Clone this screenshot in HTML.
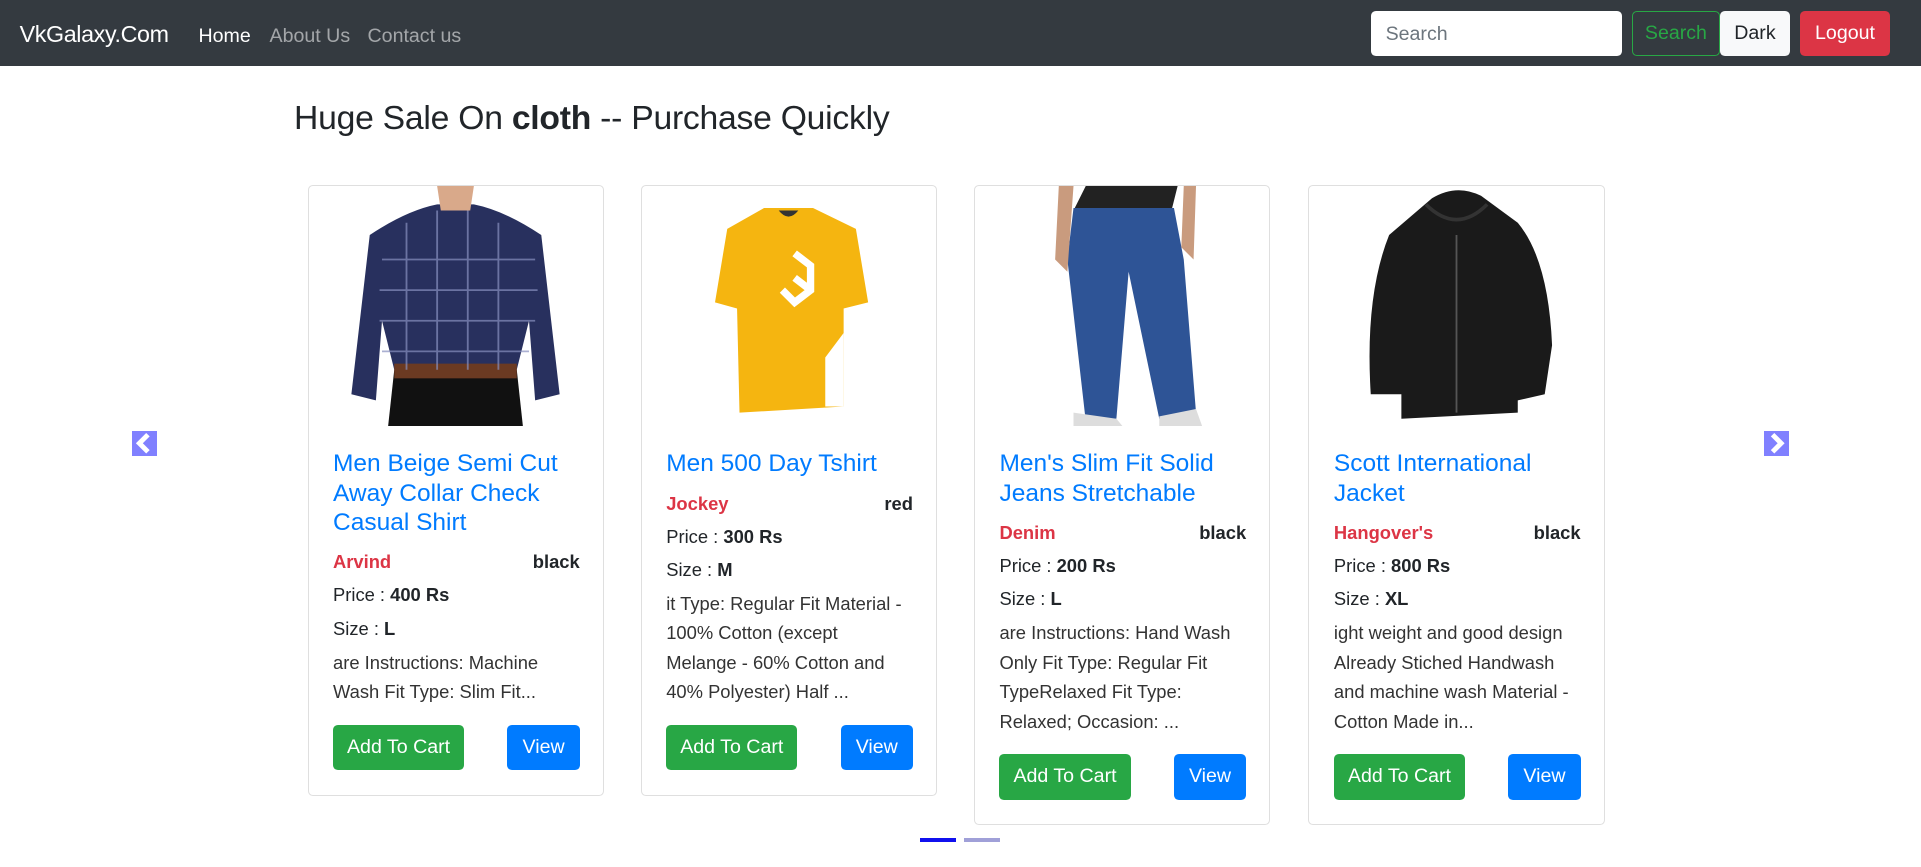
<!DOCTYPE html>
<html><head><meta charset="utf-8"><style>
*{box-sizing:border-box;margin:0;padding:0}
html,body{width:1921px;height:867px;overflow:hidden;background:#fff}
#w{zoom:1.2251;width:1568px;height:708px;position:relative;font-family:"Liberation Sans",sans-serif;color:#212529}
.nav{height:54px;background:#343a40;position:relative}
.brand{position:absolute;left:16px;top:17px;color:#fff;font-size:19px;letter-spacing:-.3px}
.nl{position:absolute;top:20px;font-size:16px;color:rgba(255,255,255,.55)}
.inp{position:absolute;left:1119px;top:9px;width:205px;height:37px;background:#fff;border-radius:4px;padding:10px 12px;color:#6c757d;font-size:16px}
.btn{position:absolute;top:9px;height:37px;border-radius:4px;font-size:16px;text-align:center;line-height:37px}
h3{position:absolute;left:240px;top:82px;font-size:27.5px;font-weight:500;letter-spacing:-.2px}
.card{position:absolute;top:151px;width:242px;border:1px solid #dfdfdf;border-radius:4px;background:#fff}
.img{height:196px;display:flex;justify-content:center;overflow:hidden}
.body{padding:19px 19px 20px 20px}
.t{color:#007bff;font-size:20px;line-height:24px;font-weight:500}
.row{display:flex;justify-content:space-between;font-weight:bold;font-size:15px;line-height:24px;margin-top:8px}
.row span:first-child{color:#dc3545}
.ln{font-size:15px;line-height:24px;margin-top:3px}
.d{font-size:15px;line-height:24px;margin-top:4px;color:#333}
.bt{display:flex;justify-content:space-between;margin-top:15px}
.bt div{height:37px;line-height:37px;border-radius:4px;color:#fff;font-size:16px;text-align:center}
.arr{position:absolute;top:352px;width:20px;height:20px;background:#8080ff}
</style></head><body><div id="w">
<div class="nav">
<div class="brand">VkGalaxy.Com</div>
<div class="nl" style="left:162px;color:#fff">Home</div>
<div class="nl" style="left:220px">About Us</div>
<div class="nl" style="left:300px">Contact us</div>
<div class="inp">Search</div>
<div class="btn" style="left:1332px;width:72px;border:1px solid #28a745;color:#28a745;line-height:35px">Search</div>
<div class="btn" style="left:1404px;width:57px;background:#f8f9fa;color:#212529">Dark</div>
<div class="btn" style="left:1469px;width:74px;background:#dc3545;color:#fff">Logout</div>
</div>
<h3>Huge Sale On <b>cloth</b> -- Purchase Quickly</h3>

<div class="arr" style="left:108px"><svg width="20" height="20"><path d="M13 3 L6 10 L13 17" stroke="#fff" stroke-width="4" fill="none"/></svg></div>
<div class="arr" style="left:1440px"><svg width="20" height="20"><path d="M7 3 L14 10 L7 17" stroke="#fff" stroke-width="4" fill="none"/></svg></div>

<div class="card" style="left:251px">
<div class="img"><svg width="200" height="196"><path d="M30 40 Q60 20 85 15 L115 15 Q140 20 170 40 L185 170 L165 175 L160 110 L150 150 L50 150 L40 110 L35 175 L15 170 Z" fill="#28305e"/><path d="M50 150 L150 150 L155 196 L45 196 Z" fill="#111"/><rect x="50" y="145" width="100" height="12" fill="#6b3a22"/><path d="M85 0 L115 0 L112 20 L88 20Z" fill="#d9a98a"/><g stroke="#8890c0" stroke-width="1.5" opacity=".7"><path d="M40 60H165M38 85H167M38 110H165M40 135H160M60 30V150M85 20V150M110 20V150M135 30V150"/></g></svg></div>
<div class="body"><div class="t">Men Beige Semi Cut Away Collar Check Casual Shirt</div>
<div class="row"><span>Arvind</span><span>black</span></div>
<div class="ln">Price : <b>400 Rs</b></div><div class="ln">Size : <b>L</b></div>
<div class="d">are Instructions: Machine Wash Fit Type: Slim Fit...</div>
<div class="bt"><div style="background:#28a745;width:107px">Add To Cart</div><div style="background:#007bff;width:59px">View</div></div></div></div>

<div class="card" style="left:523px">
<div class="img"><svg width="200" height="196"><path d="M80 18 L120 18 L155 35 L165 95 L145 100 L145 180 L60 185 L58 100 L40 95 L50 35 Z" fill="#f5b510"/><path d="M92 20 Q100 30 108 20" fill="#333"/><path d="M105 55 L118 65 L118 85 L105 95 L95 85 M105 75 L118 85" stroke="#fff" stroke-width="6" fill="none"/><path d="M130 140 L145 120 L145 180 L130 180Z" fill="#fff"/></svg></div>
<div class="body"><div class="t">Men 500 Day Tshirt</div>
<div class="row"><span>Jockey</span><span>red</span></div>
<div class="ln">Price : <b>300 Rs</b></div><div class="ln">Size : <b>M</b></div>
<div class="d">it Type: Regular Fit Material - 100% Cotton (except Melange - 60% Cotton and 40% Polyester) Half ...</div>
<div class="bt"><div style="background:#28a745;width:107px">Add To Cart</div><div style="background:#007bff;width:59px">View</div></div></div></div>

<div class="card" style="left:795px">
<div class="img"><svg width="200" height="196"><path d="M70 0 L145 0 L140 20 L60 20Z" fill="#222"/><path d="M60 18 L142 18 L150 60 L160 185 L130 190 L105 70 L95 190 L70 192 L55 60 Z" fill="#2e5496"/><path d="M48 0 L60 0 L55 70 L45 60Z M150 0 L160 0 L158 60 L148 50Z" fill="#c99b7e"/><path d="M60 185 L95 190 L100 196 L60 196Z M130 188 L160 182 L165 196 L130 196Z" fill="#ddd"/></svg></div>
<div class="body"><div class="t">Men's Slim Fit Solid Jeans Stretchable</div>
<div class="row"><span>Denim</span><span>black</span></div>
<div class="ln">Price : <b>200 Rs</b></div><div class="ln">Size : <b>L</b></div>
<div class="d">are Instructions: Hand Wash Only Fit Type: Regular Fit TypeRelaxed Fit Type: Relaxed; Occasion: ...</div>
<div class="bt"><div style="background:#28a745;width:107px">Add To Cart</div><div style="background:#007bff;width:59px">View</div></div></div></div>

<div class="card" style="left:1068px">
<div class="img"><svg width="200" height="196"><path d="M80 10 Q100 -2 120 8 L150 30 Q175 60 178 130 L172 170 L150 175 L150 185 L55 190 L55 170 L30 170 Q25 90 45 40 Z" fill="#1a1a1a"/><path d="M75 15 Q100 40 125 15" stroke="#333" stroke-width="3" fill="none"/><path d="M100 40 V185" stroke="#555" stroke-width="1.5"/></svg></div>
<div class="body"><div class="t">Scott International Jacket</div>
<div class="row"><span>Hangover's</span><span>black</span></div>
<div class="ln">Price : <b>800 Rs</b></div><div class="ln">Size : <b>XL</b></div>
<div class="d">ight weight and good design Already Stiched Handwash and machine wash Material - Cotton Made in...</div>
<div class="bt"><div style="background:#28a745;width:107px">Add To Cart</div><div style="background:#007bff;width:59px">View</div></div></div></div>

<div style="position:absolute;left:751px;top:684px;width:29px;height:3px;background:#1010ee"></div>
<div style="position:absolute;left:787px;top:684px;width:29px;height:3px;background:#a0a0d8"></div>
</div></body></html>
